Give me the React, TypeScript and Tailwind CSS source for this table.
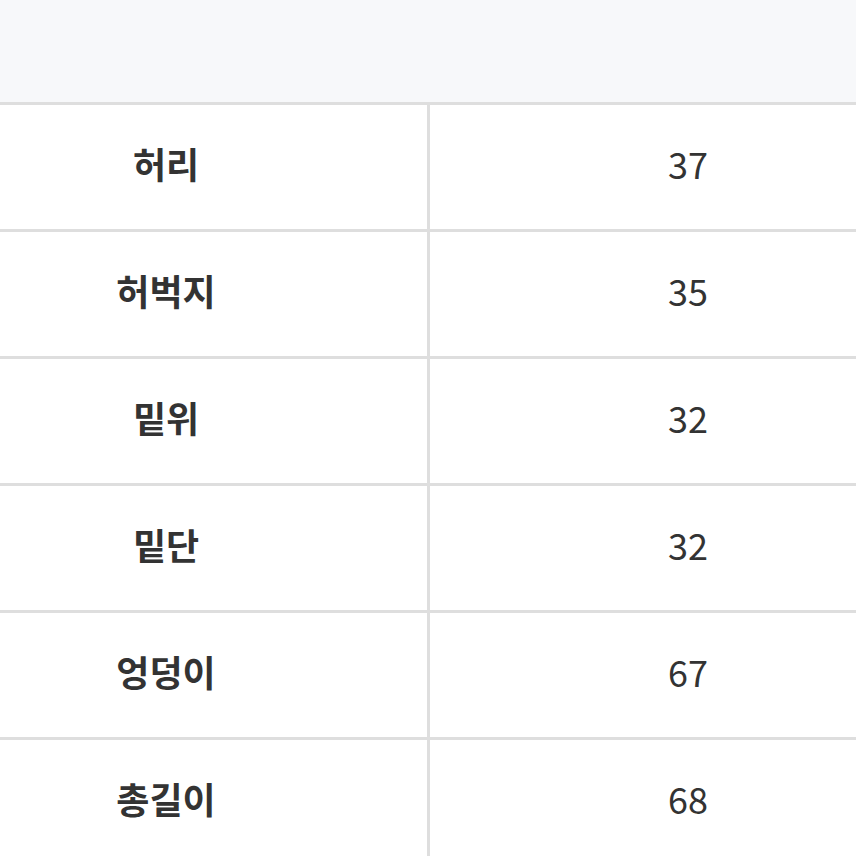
const rows = [
  { label: '허리', value: '37' },
  { label: '허벅지', value: '35' },
  { label: '밑위', value: '32' },
  { label: '밑단', value: '32' },
  { label: '엉덩이', value: '67' },
  { label: '총길이', value: '68' },
]

export default function App() {
  return (
    <div
      className="w-[856px] h-[856px] overflow-hidden bg-white text-[#333]"
      style={{ fontFamily: '"Noto Sans CJK KR", "Noto Sans", sans-serif' }}
    >
      <div className="h-[102px] bg-[#f7f8fa]" />
      <div className="ml-[-95px] w-[1041px]">
        {rows.map((r) => (
          <div key={r.label} className="flex h-[127px] border-t-[3px] border-[#dedede]">
            <div className="w-[525px] pb-[8px] flex items-center justify-center border-r-[3px] border-[#dedede] text-[36px] font-bold">
              {r.label}
            </div>
            <div className="flex-1 pb-[8px] flex items-center justify-center text-[36px]">
              {r.value}
            </div>
          </div>
        ))}
      </div>
    </div>
  )
}
